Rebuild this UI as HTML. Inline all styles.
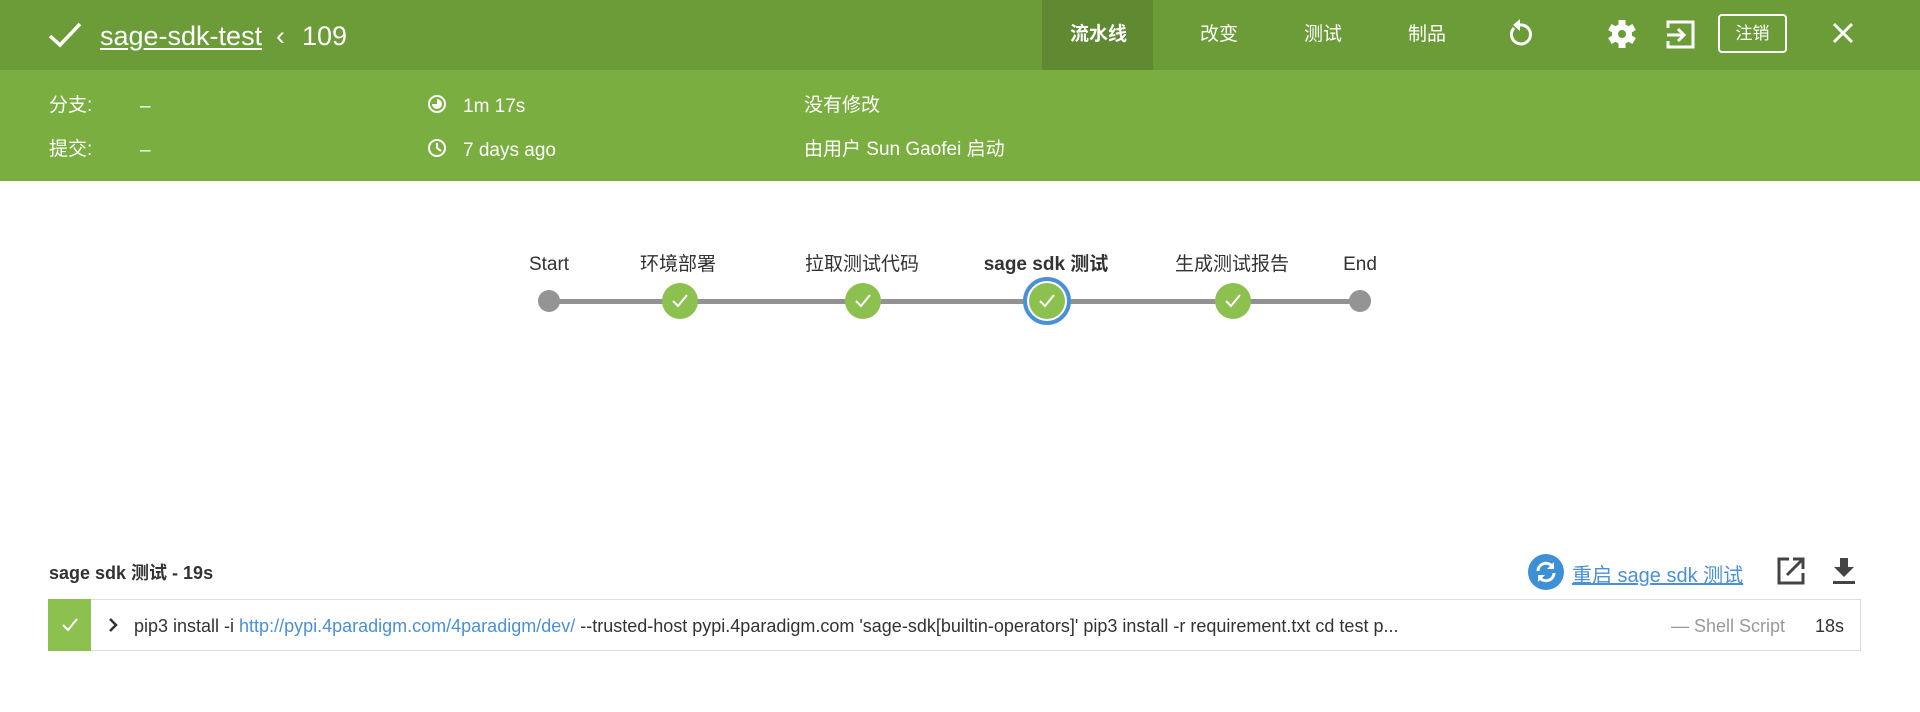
<!DOCTYPE html>
<html><head><meta charset="utf-8"><style>
*{margin:0;padding:0;box-sizing:border-box}
body{width:1920px;height:712px;background:#fff;font-family:"Liberation Sans","Noto Sans CJK SC",sans-serif;position:relative;overflow:hidden;color:#333}
.abs{position:absolute;white-space:nowrap}
#top{position:absolute;left:0;top:0;width:1920px;height:70px;background:#6c9c38}
#sub{position:absolute;left:0;top:70px;width:1920px;height:111px;background:#7aae40}
.w{color:#fff}
.nav{font-size:19px;color:#fff;top:19px}
.r{font-size:19px;color:#fff}
.lbl{font-size:19px;color:#333;top:249px;transform:translateX(-50%)}
.node{position:absolute;border-radius:50%;transform:translate(-50%,-50%)}
.g{width:36px;height:36px;background:#8cc04f}
.g svg{position:absolute;left:9px;top:10px}
</style></head><body>
<div id="top"></div><div id="sub"></div>
<div class="abs" style="left:1042px;top:0;width:111px;height:70px;background:#5f8a31"></div>
<svg class="abs" style="left:48px;top:22px" width="34" height="26" viewBox="0 0 34 26"><path d="M2 14 L12 23 L32 2" stroke="#fff" stroke-width="3.5" fill="none"/></svg>
<div class="abs w" style="left:100px;top:21px;font-size:27px;text-decoration:underline;text-underline-offset:3px">sage-sdk-test</div>
<div class="abs w" style="left:276px;top:21px;font-size:27px">‹</div>
<div class="abs w" style="left:302px;top:21px;font-size:27px">109</div>
<div class="abs nav" style="left:1070px;font-weight:bold">流水线</div>
<div class="abs nav" style="left:1200px">改变</div>
<div class="abs nav" style="left:1304px">测试</div>
<div class="abs nav" style="left:1408px">制品</div>
<svg class="abs" style="left:1506px;top:18px" width="28" height="30" viewBox="0 0 28 30"><path d="M8 10 A9.5 9.5 0 1 0 14 7" stroke="#fff" stroke-width="3" fill="none"/><path d="M14 1 L14 13 L7 7 Z" fill="#fff"/></svg>
<svg class="abs" style="left:1607px;top:19px" width="30" height="30" viewBox="0 0 30 30"><g fill="#fff" transform="translate(15 15)"><circle r="10"/><rect x="-3.5" y="-14" width="7" height="28"/><rect x="-3.5" y="-14" width="7" height="28" transform="rotate(60)"/><rect x="-3.5" y="-14" width="7" height="28" transform="rotate(120)"/></g><circle cx="15" cy="15" r="4" fill="#6c9c38"/></svg>
<svg class="abs" style="left:1666px;top:20px" width="30" height="30" viewBox="0 0 30 30"><path d="M2 8 V2 H27 V27 H2 V21" stroke="#fff" stroke-width="3" fill="none"/><path d="M1 15 H18 M12 9 L18 15 L12 21" stroke="#fff" stroke-width="3" fill="none"/></svg>
<div class="abs" style="left:1718px;top:14px;width:69px;height:39px;border:2px solid #fff;border-radius:4px;color:#fff;font-size:17px;text-align:center;line-height:35px">注销</div>
<svg class="abs" style="left:1832px;top:22px" width="22" height="22" viewBox="0 0 22 22"><path d="M2 2 L20 20 M20 2 L2 20" stroke="#fff" stroke-width="3"/></svg>
<div class="abs r" style="left:49px;top:90px">分支:</div>
<div class="abs r" style="left:49px;top:134px">提交:</div>
<div class="abs r" style="left:140px;top:96px">–</div>
<div class="abs r" style="left:140px;top:140px">–</div>
<svg class="abs" style="left:427px;top:94px" width="20" height="20" viewBox="0 0 20 20"><circle cx="10" cy="10" r="8" stroke="#fff" stroke-width="2" fill="none"/><path d="M10 5 A5 5 0 1 1 5 10 L10 10Z" fill="#fff"/></svg>
<svg class="abs" style="left:427px;top:138px" width="20" height="20" viewBox="0 0 20 20"><circle cx="10" cy="10" r="8" stroke="#fff" stroke-width="2" fill="none"/><path d="M10 5 V10 L14 13" stroke="#fff" stroke-width="2" fill="none"/></svg>
<div class="abs r" style="left:463px;top:96px">1m 17s</div>
<div class="abs r" style="left:463px;top:140px">7 days ago</div>
<div class="abs r" style="left:804px;top:90px">没有修改</div>
<div class="abs r" style="left:804px;top:134px">由用户 Sun Gaofei 启动</div>

<div class="abs" style="left:549px;top:299px;width:811px;height:5px;background:#929292"></div>
<div class="abs lbl" style="left:549px;top:254px">Start</div>
<div class="abs lbl" style="left:678px">环境部署</div>
<div class="abs lbl" style="left:862px">拉取测试代码</div>
<div class="abs lbl" style="left:1046px;font-weight:bold">sage sdk 测试</div>
<div class="abs lbl" style="left:1232px">生成测试报告</div>
<div class="abs lbl" style="left:1360px;top:254px">End</div>
<div class="node" style="left:549px;top:301px;width:22px;height:22px;background:#949494"></div>
<div class="node" style="left:1360px;top:301px;width:22px;height:22px;background:#949494"></div>
<div class="node" style="left:1047px;top:301px;width:48px;height:48px;border:4px solid #4a90d9;background:#fff"></div>
<div class="node g" style="left:680px;top:301px"><svg width="18" height="16" viewBox="0 0 18 16"><path d="M2 8 L7 13 L16 2" stroke="#fff" stroke-width="2" fill="none"/></svg></div>
<div class="node g" style="left:863px;top:301px"><svg width="18" height="16" viewBox="0 0 18 16"><path d="M2 8 L7 13 L16 2" stroke="#fff" stroke-width="2" fill="none"/></svg></div>
<div class="node g" style="left:1047px;top:301px"><svg width="18" height="16" viewBox="0 0 18 16"><path d="M2 8 L7 13 L16 2" stroke="#fff" stroke-width="2" fill="none"/></svg></div>
<div class="node g" style="left:1233px;top:301px"><svg width="18" height="16" viewBox="0 0 18 16"><path d="M2 8 L7 13 L16 2" stroke="#fff" stroke-width="2" fill="none"/></svg></div>

<div class="abs" style="left:49px;top:559px;font-size:18px;font-weight:bold;color:#333">sage sdk 测试 - 19s</div>
<svg class="abs" style="left:1528px;top:554px" width="36" height="36" viewBox="0 0 36 36"><circle cx="18" cy="18" r="18" fill="#3d8fd6"/><path d="M10 17 A8 8 0 0 1 24 12 M26 19 A8 8 0 0 1 12 24" stroke="#fff" stroke-width="3" fill="none"/><path d="M26 8 V15 H19Z M10 28 V21 H17Z" fill="#fff"/></svg>
<div class="abs" style="left:1572px;top:559px;font-size:20px;color:#4a90d9;text-decoration:underline">重启 sage sdk 测试</div>
<svg class="abs" style="left:1777px;top:557px" width="28" height="28" viewBox="0 0 28 28"><path d="M12 2 H2 V26 H26 V16" stroke="#444" stroke-width="3" fill="none"/><path d="M10 18 L25 3 M16 2 H26 V12" stroke="#444" stroke-width="3" fill="none"/></svg>
<svg class="abs" style="left:1832px;top:557px" width="24" height="28" viewBox="0 0 24 28"><path d="M8 1 H16 V10 H22 L12 20 L2 10 H8Z" fill="#444"/><rect x="1" y="24" width="22" height="3" fill="#444"/></svg>

<div class="abs" style="left:48px;top:599px;width:1813px;height:52px;border:1px solid #ddd;border-left:none;background:#fff"></div>
<div class="abs" style="left:48px;top:599px;width:43px;height:52px;background:#8cc04f"></div>
<svg class="abs" style="left:61px;top:617px" width="18" height="16" viewBox="0 0 18 16"><path d="M2 8 L7 13 L16 2" stroke="#fff" stroke-width="2" fill="none"/></svg>
<svg class="abs" style="left:108px;top:617px" width="10" height="16" viewBox="0 0 10 16"><path d="M2 2 L8 8 L2 14" stroke="#333" stroke-width="2.5" fill="none"/></svg>
<div class="abs" style="left:134px;top:616px;font-size:18px;color:#333">pip3 install -i <span style="color:#4a90d9">http://pypi.4paradigm.com/4paradigm/dev/</span> --trusted-host pypi.4paradigm.com 'sage-sdk[builtin-operators]' pip3 install -r requirement.txt cd test p...</div>
<div class="abs" style="left:1671px;top:616px;font-size:18px;color:#999">— Shell Script</div>
<div class="abs" style="left:1815px;top:616px;font-size:18px;color:#333">18s</div>
</body></html>
